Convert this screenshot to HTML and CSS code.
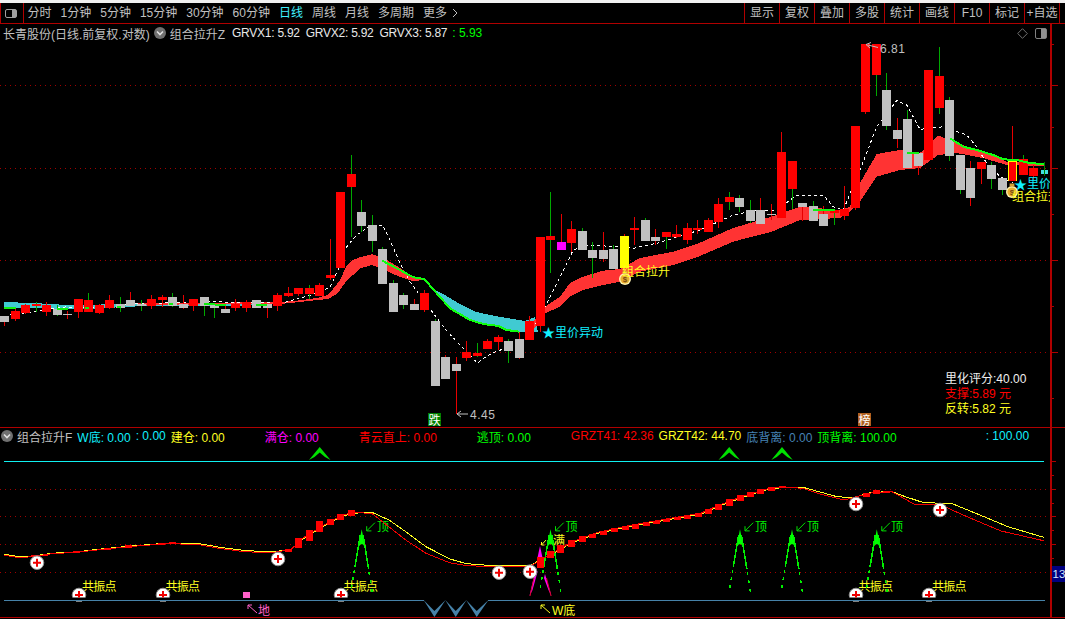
FILE: index.html
```html
<!DOCTYPE html>
<html lang="zh-CN">
<head>
<meta charset="utf-8">
<title>长青股份 日线</title>
<link rel="stylesheet" href="styles.css">
</head>
<body>
<div class="app">
  <header class="toolbar">
    <button class="tool-toggle" aria-label="panel">
      <svg width="12" height="9" viewBox="0 0 12 9"><rect x="0.5" y="0.5" width="11" height="8" rx="1.5" fill="none" stroke="#a0a0a0"/><rect x="7" y="1" width="4" height="7" fill="#a0a0a0"/></svg>
    </button>
    <nav class="periods">
      <span>分时</span><span>1分钟</span><span>5分钟</span><span>15分钟</span><span>30分钟</span><span>60分钟</span>
      <span class="active">日线</span><span>周线</span><span>月线</span><span>多周期</span><span>更多<svg class="more" width="6" height="10" viewBox="0 0 6 10"><path d="M1 1l4 4-4 4" fill="none" stroke="#c0c0c0"/></svg></span>
    </nav>
    <div class="actions">
      <span>显示</span><span>复权</span><span>叠加</span><span>多股</span><span>统计</span><span>画线</span><span>F10</span><span>标记</span><span>+自选</span>
    </div>
  </header>

  <main class="main">
    <svg class="chart" viewBox="0 24 1065 595" width="1065" height="595">
      <defs>
        <clipPath id="priceClip"><rect x="0" y="24" width="1050" height="403"/></clipPath>
        <clipPath id="halfClip"><rect x="0" y="575" width="1050" height="22.5"/></clipPath>
        <g id="plus">
          <circle r="6.8" fill="#fff" stroke="#909090" stroke-width="1"/>
          <path d="M-4 0H4M0-4V4" stroke="#f00000" stroke-width="2"/>
        </g>
        <g id="spike">
          <polygon points="0,0 -3.5,18 -1,15 1,15 3.5,18" fill="#00ff00"/>
          <path class="spike-leg" d="M-1.5 6L-10.5 60" stroke-dasharray="32 3 3 4 3 5 3 5 3 6"/>
          <path class="spike-leg" d="M1.5 6L11 66" stroke-dasharray="34 3 3 5 3 6 3 6 3 6"/>
        </g>
        <polygon id="caret" points="0,13 10.7,0 21.5,13 16,10 10.7,5.5 5.5,10" fill="#00e000"/>
        <path id="arrowDown" d="M8.2 0L0 8.2M0 3.5V8.2H4.7" fill="none" stroke="#00e000"/>
        <g id="bag">
          <circle cx="7" cy="10" r="6" fill="#fff3b0"/>
          <circle cx="7" cy="10" r="4.6" fill="#e8b030"/>
          <rect x="4.6" y="1.5" width="4.8" height="3" fill="#d8a030"/>
          <text class="bag-mark" x="7" y="13">$</text>
        </g>
      </defs>

      <!-- grid -->
      <g class="grid">
        <path d="M0 85.5H1050M0 168.5H1050M0 260.5H1050M0 352.5H1050M0 489.5H1050M0 516.5H1050M0 544.5H1050M0 572.5H1050"/>
      </g>

      <g clip-path="url(#priceClip)">
        <!-- ribbons -->
        <polygon class="rib-cyan" points="4,302 31,303 52,304 74,305.5 115,304 145,303 230,303.5 270,304 270,305 230,306 145,306 115,307.5 74,309.5 52,308.5 31,307.5 4,308"/>
        <polygon class="rib-red" points="137,303.5 283,302 300,300.3 317,298 328,295 335,286.7 340,280 347,265 353,260 360,257.3 372,254.3 382,257 400,268 413,277 424,279 424,280 413,281 400,277 382,269 372,265 360,268.3 353,275 347,280 340,290 335,295 328,299 317,300 300,302 283,303.7 137,305"/>
        <polygon class="rib-cyan" points="424,280 436,290.7 445,295 460,304 475,311.7 490,315 507,318 525,321 535,317 538,332 519,332 506.7,330 498.3,326 483.3,324 470,320 450,308.3 436.7,293.3 424.3,279"/>
        <polygon class="rib-red" points="533,322 545,306.7 560,296.7 570,283 583,276.7 603,270.7 620,269 640,258 673,251.7 700,242.7 733,228 771.7,216.7 800,206.7 840,210 850,206.7 860,183 876.7,154 900,150 920,153 938,135.3 956.7,143 983,151.7 1006.7,161.7 1044,164 1044,166 1006.7,165 983,158 956.7,153 938,155 920,168 900,170 876.7,176.7 860,201.7 850,211.7 840,218 800,220 771.7,231.7 733,241.7 700,256 673,265 640,271.7 620,281.7 603,285 583,290 570,296.7 560,306.7 545,313.3 533,330"/>

        <!-- moving average -->
        <polyline class="ma" points="10,315 20,313.3 33,312.3 43,310 67,306.7 80,308.3 117,305 147,303.3 180,302.7 200,301.7 283,302.7 300,298.3 313,294.3 330,287.3 338,270 346.7,246.7 356.7,235 371.7,225 382.3,225 390,240 400,263.3 410,281.7 423.3,300 433.3,313.3 443.3,326.7 456.7,341.7 470,355 477.3,363.3 483.3,358.3 496.7,351 513.3,346.7 526.7,340 545,306.7 556.7,283.3 566.7,263.3 573.3,250 586.7,245 616.7,246.7 633.3,248.3 656.7,243.3 700,230 733.3,215 756.7,210 776.7,210 796.7,195 823.3,195 833.3,206.7 843.3,210 860,170 876.7,126.7 896.7,100.7 906.7,105 920,129.3 943.3,126.7 966.7,135 976.7,146.7 986.7,163.3 1000,176.7 1013.3,183.3"/>

        <!-- candles are drawn here by script.js -->
        <g id="candles"></g>

        <!-- bright green trend line -->
        <polyline class="trend" points="382.3,260.7 400,270 413.3,277.3 424.3,279 436.7,293.3 450,308.3 470,320 483.3,324 498.3,326 506.7,330 519.3,331.7"/>
        <polyline class="trend" points="950,138.3 963.3,146.7 976.7,150 993.3,155 1003.3,159.3 1016.7,160 1028.3,162.7 1044.3,164.3"/>
        <path class="trend-bits" d="M4 308H16M57 308.5H68M85 308H89M117 306.5H121M169 304H173M204 304H215M215 305H226M256 305H267M907 152.5H919M813 210H835"/>
        <rect class="last-dot" x="1041" y="170" width="7" height="4"/>
        <rect class="last-wick" x="1044" y="162" width="1" height="14"/>

        <!-- marks -->
        <use href="#bag" x="618" y="269"/>
        <use href="#bag" x="1005" y="182"/>
        <text class="lbl cyan star" x="542" y="337">★</text>
        <text class="lbl cyan" x="555" y="336.5">里价异动</text>
        <text class="lbl yellow" x="622" y="275.5">组合拉升</text>
        <text class="lbl cyan star" x="1014" y="188.5">★</text>
        <text class="lbl cyan" x="1027" y="188">里价</text>
        <text class="lbl yellow" x="1012" y="200.5">组合拉升</text>

        <path class="price-arrow" d="M468 414H457M461 411L457 414L461 417"/>
        <text class="lbl price-num" x="470" y="418.5">4.45</text>
        <path class="price-arrow" d="M878 47.5L868 45M871 42.5L866 44.5L870 48"/>
        <text class="lbl price-num" x="880" y="53">6.81</text>

        <rect class="tag-green" x="428" y="413" width="13" height="13"/>
        <text class="lbl tag-text" x="428.5" y="424.5">跌</text>
        <rect class="tag-orange" x="858" y="413" width="13" height="13"/>
        <text class="lbl tag-text" x="858.5" y="424.5">榜</text>

        <text class="lbl white" x="945" y="382.5">里化评分:40.00</text>
        <text class="lbl red" x="945" y="397.5">支撑:5.89 元</text>
        <text class="lbl yellow" x="945" y="412.5">反转:5.82 元</text>
      </g>

      <!-- lower panel -->
      <path class="cyan-line" d="M4 461.5H1044"/>
      <use href="#caret" x="309" y="447"/>
      <use href="#caret" x="718.5" y="447"/>
      <use href="#caret" x="771.3" y="447"/>

      <text class="lbl yellow narrow" x="82" y="591">共振点</text>
      <text class="lbl yellow narrow" x="165.5" y="591">共振点</text>
      <text class="lbl yellow narrow" x="343.5" y="591">共振点</text>
      <text class="lbl yellow narrow" x="858.5" y="591">共振点</text>
      <text class="lbl yellow narrow" x="932" y="591">共振点</text>
      <text class="lbl yellow" x="553" y="545">满</text>
      <path class="yellow-arrow" d="M546 540L541.5 545M541.5 542V545H544.5"/>

      <!-- spikes -->
      <use href="#spike" x="361.7" y="529.3"/>
      <use href="#spike" x="740" y="529.3"/>
      <use href="#spike" x="792" y="529.3"/>
      <use href="#spike" x="876.8" y="529.3"/>

      <polygon class="mag" points="540,546 537,560 543,560"/>
      <polygon class="mag" points="536,568 529.5,596 532.5,590 537.5,572"/>
      <polygon class="mag" points="545,574 551.5,596 548.5,590 544,578"/>
      <path class="mag-red" d="M534 578L530 596M546.5 578L551 596"/>
      <use href="#spike" x="550.5" y="529.3"/>

      <use href="#arrowDown" x="366.7" y="522.7"/>
      <use href="#arrowDown" x="745" y="522.7"/>
      <use href="#arrowDown" x="797" y="522.7"/>
      <use href="#arrowDown" x="881.8" y="522.7"/>
      <use href="#arrowDown" x="555.5" y="522.7"/>
      <text class="lbl green" x="377" y="531">顶</text>
      <text class="lbl green" x="755" y="531">顶</text>
      <text class="lbl green" x="807" y="531">顶</text>
      <text class="lbl green" x="891" y="531">顶</text>
      <text class="lbl green" x="565.5" y="531">顶</text>

      <!-- curves -->
      <polyline class="curve-yellow" points="4,554.3 20,556.7 34,556 51,553.3 78,551.7 101,549 135,545.7 169,543 199.5,543.7 220,547.3 243,550.3 270,552 291,549.7 304,538.3 321,527.7 338,518.3 351.6,513.3 372,512.3 389,520 405.7,531.7 426,546.7 450,559 466.5,563.7 497,566 530,565.7 540,560 550.5,555 571,543.3 598,533.3 632,526 666.5,520 700.6,514.3 717.7,506.7 741.6,497.7 769,489 786,487.3 803,487.3 837,496.7 854,497.7 871,492.3 892,491.7 905.4,496.7 922.5,502.3 953,504 984,516.7 1008,526.7 1043.6,537.3"/>
      <polyline class="curve-red" points="4,555.3 20,557.7 34,556.5 51,553.8 78,552.2 101,549.5 135,546.2 169,543.5 199.5,544.8 220,548.5 243,551.5 270,553 291,549.5 304,537.3 321,526.7 338,517.3 351.6,512.3 372,513.5 388.8,526.7 405.7,540 426,553.3 449.6,562.7 466.5,565.7 497,566.7 530,566.5 540,560.5 550.5,554.5 571,542.3 598,532.3 632,525 666.5,519 700.6,513.3 717.7,505.7 741.6,496.7 769,488.3 786,487.3 803,488.3 820,494 844,500 871,493 892,491.7 915.7,505 939.5,504.3 967,516.7 1001,531 1043.6,540.7"/>
      <g id="bars"></g>

      <!-- plus marks -->
      <use href="#plus" x="37" y="562.7"/>
      <use href="#plus" x="278" y="559"/>
      <use href="#plus" x="499" y="572.7"/>
      <use href="#plus" x="530" y="571.7"/>
      <use href="#plus" x="856" y="504"/>
      <use href="#plus" x="940" y="510"/>
      <g clip-path="url(#halfClip)">
        <use href="#plus" x="79" y="595"/>
        <use href="#plus" x="163" y="595"/>
        <use href="#plus" x="341" y="595"/>
        <use href="#plus" x="856" y="595"/>
        <use href="#plus" x="929" y="595"/>
      </g>
      <path class="half-foot" d="M76 601.5H82M160 601.5H166M338 601.5H344M853 601.5H859M926 601.5H932"/>

      <!-- baseline and W -->
      <path class="baseline" d="M4 600.5H424M488 600.5H1045"/>
      <polygon class="wedge" points="423.6,600 434.4,617 445.6,600 434.4,611"/>
      <polygon class="wedge" points="445.2,600 455.7,617 466.5,600 455.7,611"/>
      <polygon class="wedge" points="466.1,600 476.7,617 488.5,600 476.7,611"/>
      <rect class="pink" x="243" y="592" width="7" height="6"/>
      <path class="pink-arrow" d="M257 613L248 605M248 609V605H252"/>
      <text class="lbl pink-text" x="258" y="614.5">地</text>
      <path class="yellow-arrow" d="M550 613L541 605M541 609V605H545"/>
      <text class="lbl yellow" x="552" y="614.5">W底</text>

      <!-- axis -->
      <rect class="axis" x="1050" y="24" width="2" height="594"/>
      <path class="ticks" d="M1052 85.5H1058M1052 168.5H1058M1052 260.5H1058M1052 352.5H1058M1052 461.5H1056M1052 489.5H1056M1052 516.5H1056M1052 544.5H1056"/>
      <path class="ticks-short" d="M1052 44.5H1054M1052 127.5H1054M1052 214.5H1054M1052 306.5H1054M1052 398.5H1054M1052 475.5H1054M1052 503.5H1054M1052 530.5H1054M1052 558.5H1054"/>
      <rect class="axis-box" x="1052" y="566" width="13" height="16"/>
      <text class="axis-num" x="1052.5" y="578">13</text>
    </svg>

    <section class="panel panel-price">
      <div class="legend">
        <span class="stock">长青股份(日线.前复权.对数)</span>
        <svg class="drop" width="12" height="12" viewBox="0 0 12 12"><circle cx="6" cy="6" r="6" fill="#707070"/><path d="M3 4.5L6 7.5L9 4.5" fill="none" stroke="#e0e0e0" stroke-width="1.6"/></svg>
        <span class="stock">组合拉升Z</span>
        <span class="white first-val">GRVX1: 5.92</span>
        <span class="white next-val">GRVX2: 5.92</span>
        <span class="white next-val">GRVX3: 5.87</span>
        <span class="green">: 5.93</span>
        <div class="legend-tools">
          <svg width="11" height="11" viewBox="0 0 11 11"><path d="M5.5 0.7L10.3 5.5L5.5 10.3L0.7 5.5Z" fill="none" stroke="#707070"/></svg>
          <svg width="12" height="11" viewBox="0 0 12 11"><rect x="0.5" y="0.5" width="11" height="10" rx="1.5" fill="none" stroke="#808080"/><rect x="6" y="1" width="5" height="9" fill="#909090"/></svg>
        </div>
      </div>
    </section>

    <section class="panel panel-osc">
      <div class="legend">
        <svg class="drop" width="12" height="12" viewBox="0 0 12 12"><circle cx="6" cy="6" r="6" fill="#707070"/><path d="M3 4.5L6 7.5L9 4.5" fill="none" stroke="#e0e0e0" stroke-width="1.6"/></svg>
        <span class="stock">组合拉升F</span>
        <span class="cyan">W底: 0.00</span>
        <span class="cyan">: 0.00</span>
        <span class="yellow">建仓: 0.00</span>
        <span class="magenta far">满仓: 0.00</span>
        <span class="red far">青云直上: 0.00</span>
        <span class="green far">逃顶: 0.00</span>
        <span class="red far">GRZT41: 42.36</span>
        <span class="yellow">GRZT42: 44.70</span>
        <span class="steel">底背离: 0.00</span>
        <span class="green">顶背离: 100.00</span>
        <span class="cyan farther">: 100.00</span>
      </div>
    </section>
  </main>
</div>
<script src="script.js"></script>
</body>
</html>
```

FILE: styles.css
```css
* { box-sizing: border-box; }

html, body {
  margin: 0;
  padding: 0;
  background: #000;
  overflow: hidden;
}

body {
  font-family: "Liberation Sans", "Noto Sans CJK SC", sans-serif;
  font-size: 12px;
  color: #c0c0c0;
}

.app {
  width: 1065px;
  height: 619px;
  display: flex;
  flex-direction: column;
  border-top: 3px solid #f0f0f0;
  background: #000;
}

.toolbar {
  flex: 0 0 21px;
  display: flex;
  align-items: stretch;
  border-bottom: 1px solid #b00000;
  line-height: 20px;
  white-space: nowrap;
}

.tool-toggle {
  width: 24px;
  padding: 0 0 0 4px;
  background: none;
  border: 0;
  border-left: 1px solid #b00000;
  border-right: 1px solid #b00000;
  display: flex;
  align-items: center;
}

.periods {
  display: flex;
  gap: 9px;
  padding-left: 3.5px;
}

.periods .active { color: #40f0ff; }
.more { margin-left: 5px; vertical-align: -1px; }

.actions {
  margin-left: auto;
  margin-right: 5px;
  display: flex;
  border-left: 1px solid #b00000;
}

.actions span {
  width: 35px;
  text-align: center;
  border-right: 1px solid #b00000;
}

.main {
  position: relative;
  flex: 1;
}

.chart {
  position: absolute;
  left: 0;
  top: 0;
  display: block;
}

.panel { position: relative; }

.panel-price { height: 403px; }

.panel-osc {
  height: 191px;
  border-top: 1px solid #b00000;
  border-bottom: 1px solid #b00000;
}

.legend {
  display: flex;
  align-items: center;
  gap: 5px;
  height: 18px;
  padding-left: 3px;
  white-space: nowrap;
}

.panel-osc .legend { height: 16px; padding-left: 1px; }
.panel-osc .drop { margin: 0 -1px 0 0; }

.drop { margin: 0 -1px; flex: none; }

.legend-tools {
  margin-left: auto;
  margin-right: 18px;
  display: flex;
  align-items: center;
  gap: 7px;
}

.far { margin-left: 35px; }
.farther { margin-left: 84px; }
.first-val { margin-left: 2px; letter-spacing: -0.25px; }
.next-val { margin-left: 1px; letter-spacing: -0.25px; }

.stock { color: #c0c0c0; }
.white { color: #e8e8e8; fill: #f0f0f0; }
.green { color: #00ff00; fill: #00f000; }
.cyan { color: #10f0ff; fill: #10f0ff; }
.yellow { color: #ffff20; fill: #ffff20; }
.magenta { color: #ff00ff; }
.red { color: #ff0000; fill: #ff0000; }
.steel { color: #4682b4; }

/* chart drawing */
.lbl { font-size: 12px; font-family: "Liberation Sans", "Noto Sans CJK SC", sans-serif; }
.star { font-size: 13px; }
.narrow { letter-spacing: -0.8px; }

.grid path {
  fill: none;
  stroke: #a00000;
  stroke-width: 1;
  stroke-dasharray: 1 4;
  shape-rendering: crispEdges;
}

.rib-cyan { fill: #40cad2; shape-rendering: crispEdges; }
.rib-red { fill: #ff3333; shape-rendering: crispEdges; }

.ma {
  fill: none;
  stroke: #fff;
  stroke-width: 1;
  stroke-dasharray: 3 3;
  shape-rendering: crispEdges;
}

.trend {
  fill: none;
  stroke: #10ff10;
  stroke-width: 2;
  shape-rendering: crispEdges;
}

.trend-bits {
  fill: none;
  stroke: #10f010;
  stroke-width: 2;
  shape-rendering: crispEdges;
}

.spike-leg {
  fill: none;
  stroke: #00f000;
  stroke-width: 1.5;
  shape-rendering: crispEdges;
}

.last-dot { fill: #40e0e0; }
.last-wick { fill: #008000; }

.price-arrow { fill: none; stroke: #c0c0c0; }
.price-num { fill: #c0c0c0; letter-spacing: 0.5px; }

.tag-green { fill: #008000; }
.tag-orange { fill: #b06020; }
.tag-text { fill: #fff; }

.bag-mark {
  font-size: 8px;
  font-family: "Liberation Sans", sans-serif;
  font-weight: bold;
  text-anchor: middle;
  fill: #7a4a10;
}

.cyan-line { stroke: #10f0f0; stroke-width: 1; fill: none; shape-rendering: crispEdges; }
.curve-yellow { fill: none; stroke: #ffff20; stroke-width: 1; shape-rendering: crispEdges; }
.curve-red { fill: none; stroke: #f00000; stroke-width: 1; shape-rendering: crispEdges; }

.mag { fill: #ff00ff; }
.mag-red { fill: none; stroke: #e00030; stroke-width: 1; }

.half-foot { stroke: #808080; fill: none; }

.baseline { fill: none; stroke: #4682a8; stroke-width: 1; shape-rendering: crispEdges; }
.wedge { fill: #4682a8; }

.pink { fill: #ff60c8; }
.pink-arrow { fill: none; stroke: #ff60c8; }
.pink-text { fill: #ff60c8; }
.yellow-arrow { fill: none; stroke: #ffff20; }

.axis { fill: #b00000; }
.ticks { stroke: #b00000; fill: none; }
.ticks-short { stroke: #b00000; fill: none; }
.axis-box { fill: #000080; }
.axis-num { fill: #d0e8ff; font-size: 11.5px; font-family: "Liberation Sans", sans-serif; }

.c-red { fill: #ff0000; }
.c-gray { fill: #c0c0c0; }
.c-mag { fill: #ff00ff; }
.c-yellow { fill: #ffff00; }
.w-red { fill: #e80000; }
.w-green { fill: #00a800; }
.bar-red { fill: #ff0000; }
```

FILE: script.js
```js
// Daily candles: [bodyTop, bodyBottom, wickTop, wickBottom, bodyColour, wickColour]
var CANDLES = [
  [316,322,316,326,'g','r'],[311,319,309,321,'r','r'],[305,313,304,314,'r','r'],[304,306,302,312,'r','g'],
  [305,312,302,316,'r','r'],[309,315,305,316,'g','g'],[314,315,311,319,'g','r'],[299,312,299,318,'r','r'],
  [300,312,293,312,'r','g'],[305,313,304,314,'r','r'],[300,308,295,309,'r','r'],[304,308,297,312,'g','g'],
  [300,306,292,306,'g','r'],[304,306,300,311,'g','g'],[299,306,295,309,'r','r'],[297,300,295,307,'r','r'],
  [297,306,293,307,'g','g'],[304,308,295,309,'g','r'],[299,306,299,311,'r','r'],[297,306,297,316,'g','g'],
  [304,308,304,318,'g','g'],[309,313,305,313,'g','r'],[304,308,299,311,'r','r'],[302,308,300,312,'r','r'],
  [300,308,300,308,'g','r'],[304,308,304,318,'g','r'],[295,306,293,311,'r','r'],[293,296,287,297,'r','r'],
  [288,294,288,296,'r','r'],[288,294,285,299,'r','g'],[285,296,283,296,'r','r'],[275,278,239,280,'r','r'],
  [192,268,192,268,'r','r'],[174,187,155,237,'r','g'],[212,226,200,232,'g','g'],[225,241,215,252,'g','g'],
  [249,284,247,284,'g','g'],[283,312,280,312,'g','g'],[295,305,293,309,'g','g'],[304,310,299,310,'g','r'],
  [293,310,290,312,'r','r'],[321,386,319,386,'g','g'],[357,379,355,379,'g','r'],[364,371,357,414,'g','r'],
  [352,358,341,361,'r','r'],[353,356,343,357,'r','g'],[341,349,339,349,'r','r'],[337,342,335,350,'r','r'],
  [341,351,339,363,'g','g'],[339,358,332,359,'g','r'],[321,340,316,340,'r','r'],[237,326,237,332,'r','r'],
  [236,240,192,273,'r','g'],[242,250,214,250,'m','r'],[229,243,221,252,'r','r'],[231,250,228,250,'g','g'],
  [250,258,242,278,'g','g'],[250,259,232,262,'g','r'],[249,269,245,269,'g','g'],[236,268,234,268,'y','r'],
  [228,230,217,245,'r','r'],[220,241,218,241,'g','g'],[237,241,229,245,'g','r'],[232,237,232,249,'r','g'],
  [234,237,225,238,'r','r'],[228,240,223,244,'r','r'],[228,230,220,234,'r','r'],[220,232,218,232,'r','r'],
  [204,222,198,228,'r','r'],[197,202,192,210,'r','g'],[198,207,195,212,'g','g'],[210,221,200,223,'g','g'],
  [210,224,198,224,'g','r'],[214,215,204,220,'g','r'],[152,218,132,218,'r','r'],[161,189,161,209,'r','g'],
  [203,207,203,221,'g','r'],[206,221,201,221,'g','g'],[214,226,206,226,'g','r'],[210,213,210,225,'r','g'],
  [209,216,186,220,'r','r'],[126,208,126,210,'r','r'],[44,112,44,114,'r','r'],[44,75,44,96,'r','g'],
  [90,126,73,130,'g','g'],[130,139,118,148,'g','r'],[119,168,110,168,'g','g'],[153,166,153,175,'g','r'],
  [70,160,70,160,'r','r'],[76,108,47,114,'r','g'],[100,156,97,161,'g','g'],[155,190,155,194,'g','g'],
  [168,198,161,206,'g','r'],[162,169,162,184,'r','r'],[165,179,162,189,'g','g'],[178,190,178,195,'g','g'],
  [161,181,126,181,'o','r'],[159,175,155,175,'r','g'],[168,176,165,180,'r','r']
];

// Oscillator bars: [centre x, top, bottom]
var BARS = [
  [34,555,557],[44,554.5,556],[76,551,553],[107,547.5,550],[128,545,547.5],[161,542.5,544.5],[172,542,544],
  [288,549,552.3],[298,537.7,548.3],[309,530,540.7],[319.5,521,531.7],[330,519,525],[340.5,514,520],[351.6,510.3,515.7],
  [540,556.7,568.3],[550.5,551,558],[560.7,545,553],[571,540,546.7],[582,536.3,541.7],[592,534,538],[603,531,535],
  [614,528,532],[625,526,530],[635,524,528.7],[646,523,526],[656,521,524],[666.5,519,522],[677,517,520],[687,516,519],
  [698,513,517],[708,509,514.3],[718,504,510],[729.6,499,505.7],[740,495,500.7],[750.5,491.7,496.7],[760.7,489,494],
  [771.6,486.7,490.7],[782,486,488.3],[855,497,499],[866,492.7,496.7],[876.5,490,494],[886.7,491,492.7]
];

var SVG_NS = 'http://www.w3.org/2000/svg';
var BODY = { r: 'c-red', g: 'c-gray', m: 'c-mag', y: 'c-yellow' };

function rect(parent, x, y, w, h, cls) {
  var el = document.createElementNS(SVG_NS, 'rect');
  el.setAttribute('x', x);
  el.setAttribute('y', y);
  el.setAttribute('width', w);
  el.setAttribute('height', h);
  el.setAttribute('class', cls);
  el.setAttribute('shape-rendering', 'crispEdges');
  parent.appendChild(el);
}

var candles = document.getElementById('candles');
CANDLES.forEach(function (c, k) {
  var left = Math.floor(0.5 + 10.5 * k);
  rect(candles, left + 4, c[2], 1, c[3] - c[2], c[5] === 'r' ? 'w-red' : 'w-green');
  if (c[4] === 'o') {
    rect(candles, left, c[0], 9, c[1] - c[0], 'c-yellow');
    rect(candles, left + 1, c[0] + 1, 7, c[1] - c[0] - 1, 'c-red');
  } else {
    rect(candles, left, c[0], 9, c[1] - c[0], BODY[c[4]]);
  }
});

var bars = document.getElementById('bars');
BARS.forEach(function (b) {
  rect(bars, Math.round(b[0] - 3.5), b[1], 7, b[2] - b[1], 'bar-red');
});
```
